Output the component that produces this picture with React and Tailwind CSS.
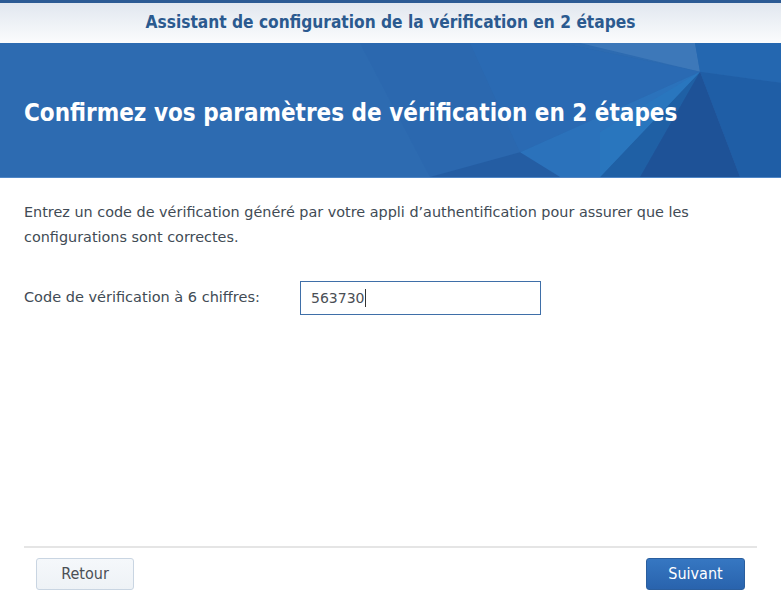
export default function App() {
  return (
    <div className="w-full h-[600px] flex flex-col bg-white font-['DejaVu_Sans',sans-serif] text-[#414b55]">
      {/* top stripe + title */}
      <div className="h-[3px] bg-[#2c5a94]" />
      <div className="h-[40px] flex items-center justify-center bg-gradient-to-b from-[#e1e7ef] to-[#fbfcfd]">
        <span className="font-['DejaVu_Sans_Condensed',sans-serif] font-bold text-[17.2px] text-[#2b5a8f]">
          Assistant de configuration de la vérification en 2 étapes
        </span>
      </div>

      {/* banner */}
      <div className="relative h-[135px] bg-[#2d6bb1] border-b border-[#4f86c6] overflow-hidden flex items-center px-6 pt-[6px]">
        <svg className="absolute inset-0 w-full h-full" viewBox="0 0 781 135" preserveAspectRatio="none">
          <polygon points="360,0 560,0 700,29 600,90 430,135" fill="#2a66ad" opacity="0.5" />
          <polygon points="580,0 695,0 700,29" fill="#4a84c0" opacity="0.55" />
          <polygon points="695,0 781,0 781,40 700,29" fill="#2467b0" />
          <polygon points="700,29 781,40 781,150 740,135" fill="#1f5ea6" />
          <polygon points="700,29 740,135 600,135" fill="#1e5297" />
          <polygon points="700,29 600,135 560,135 520,110" fill="#2b72bb" />
          <polygon points="470,0 560,0 700,29 520,110" fill="#2a6db5" opacity="0.6" />
          <polygon points="520,110 560,135 430,135" fill="#245da3" />
          <polygon points="600,90 700,29 640,135 600,135" fill="#2380c8" opacity="0.3" />
        </svg>
        <h1 className="relative font-['DejaVu_Sans_Condensed',sans-serif] font-bold text-[24px] text-white">
          Confirmez vos paramètres de vérification en 2 étapes
        </h1>
      </div>

      {/* content */}
      <div className="flex-1 px-6 pt-[22px]">
        <p className="leading-[25px] text-[14.4px]">
          Entrez un code de vérification généré par votre appli d’authentification pour assurer que les
          configurations sont correctes.
        </p>
        <div className="mt-[31px] flex items-center">
          <label className="w-[276px] text-[14.5px]">Code de vérification à 6 chiffres:</label>
          <div className="w-[241px] h-[34px] border border-[#3f6fa8] flex items-center px-[10px] text-[14px] text-[#4a4f55]">
            563730<span className="w-px h-[18px] bg-[#333] ml-px" />
          </div>
        </div>
      </div>

      {/* footer */}
      <div className="mx-6 mb-[10px]">
        <div className="h-[2px] bg-[#e5e5e5]" />
        <div className="flex justify-between px-3 mt-[10px]">
          <button className="w-[98px] h-[32px] rounded-[3px] border border-[#c9d5e2] bg-gradient-to-b from-[#f5f8fb] to-[#eef2f6] text-[16px] text-[#4a4f55] font-['DejaVu_Sans_Condensed',sans-serif]">
            Retour
          </button>
          <button className="w-[99px] h-[32px] rounded-[3px] border border-[#2a5e9e] bg-gradient-to-b from-[#3677c2] to-[#2963ad] text-[16px] text-white font-['DejaVu_Sans_Condensed',sans-serif]">
            Suivant
          </button>
        </div>
      </div>
    </div>
  );
}
